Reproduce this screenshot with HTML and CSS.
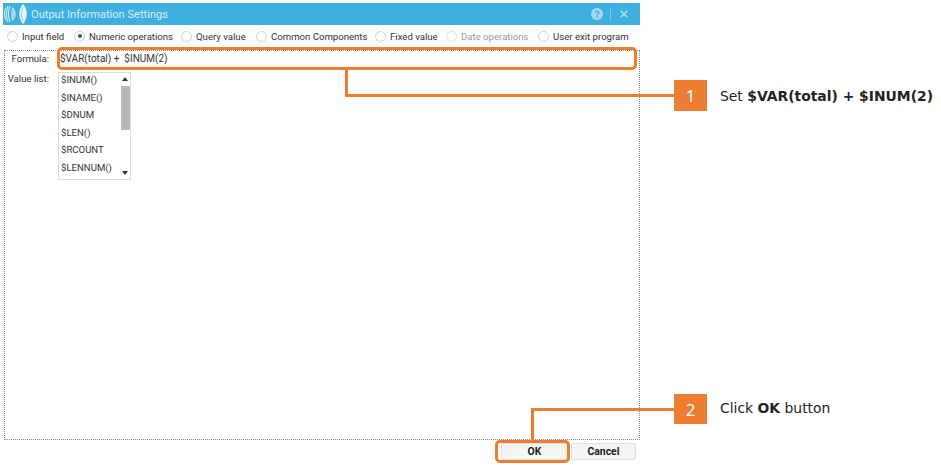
FILE: index.html
```html
<!DOCTYPE html>
<html lang="en">
<head>
<meta charset="utf-8">
<title>Output Information Settings</title>
<link rel="stylesheet" href="styles.css">
</head>
<body>
<div class="stage">
  <div class="dialog">
    <header class="titlebar">
      <svg class="logo" width="24" height="22" viewBox="0 0 24 22">
        <path d="M20 1 C15 6 15 15 20 21 C25 15 25 6 20 1Z" fill="#e4f4fb"/>
        <path d="M20 4 C18 8 18 14 20 18" fill="none" stroke="#8fd0ec" stroke-width="1"/>
        <path d="M3 5 C1 9 1 13 3 17 M5 3 C3 9 3 13 5 19 M7 3 C5 9 5 13 7 19" fill="none" stroke="#e4f4fb" stroke-width="1"/>
        <path d="M9 4 C8 9 8 13 9 18 C14 15 14 7 9 4Z" fill="#a9dcf2"/>
      </svg>
      <span class="title">Output Information Settings</span>
      <svg class="help" width="12" height="12" viewBox="0 0 12 12">
        <circle cx="6" cy="6" r="6" fill="#a5d9f0"/>
        <path d="M4.2 4.6 C4.2 2.6 7.9 2.6 7.9 4.6 C7.9 6 6 5.8 6 7.4" fill="none" stroke="#3eb0e0" stroke-width="1.4"/>
        <rect x="5.3" y="8.2" width="1.5" height="1.5" fill="#3eb0e0"/>
      </svg>
      <span class="sep"></span>
      <svg class="close" width="8" height="8" viewBox="0 0 8 8">
        <path d="M0.7 0.7 L7.3 7.3 M7.3 0.7 L0.7 7.3" stroke="#b5e0f3" stroke-width="1.6"/>
      </svg>
    </header>
    <div class="radios">
      <label class="radio radio-input"><i class="dot"></i>Input field</label>
      <label class="radio radio-numeric"><i class="dot on"></i>Numeric operations</label>
      <label class="radio radio-query"><i class="dot"></i>Query value</label>
      <label class="radio radio-common"><i class="dot"></i>Common Components</label>
      <label class="radio radio-fixed"><i class="dot"></i>Fixed value</label>
      <label class="radio radio-date off"><i class="dot"></i>Date operations</label>
      <label class="radio"><i class="dot"></i>User exit program</label>
    </div>
    <main class="panel">
      <div class="row-formula">
        <span class="lbl">Formula:</span>
        <span class="formula">$VAR(total) +&nbsp; $INUM(2)</span>
      </div>
      <div class="row-list">
        <span class="lbl">Value list:</span>
        <div class="list">
          <ul class="items">
            <li>$INUM()</li>
            <li>$INAME()</li>
            <li>$DNUM</li>
            <li>$LEN()</li>
            <li>$RCOUNT</li>
            <li>$LENNUM()</li>
          </ul>
          <div class="scroll">
            <i class="arrow up"></i>
            <i class="thumb"></i>
            <i class="arrow down"></i>
          </div>
        </div>
      </div>
    </main>
    <footer class="buttons">
      <button class="btn btn-ok">OK</button>
      <button class="btn btn-cancel">Cancel</button>
    </footer>
  </div>

  <div class="hl hl-formula"></div>
  <div class="hl hl-ok"></div>
  <div class="wire w1"></div>
  <div class="wire w2"></div>
  <div class="wire w3"></div>
  <div class="wire w4"></div>
  <div class="step step1">1</div>
  <div class="step step2">2</div>
  <p class="note note1">Set <b>$VAR(total) + $INUM(2)</b></p>
  <p class="note note2">Click <b>OK</b> button</p>
</div>
</body>
</html>
```
FILE: styles.css
```css
* { box-sizing: border-box; }
html, body { margin: 0; padding: 0; background: #fff; }
body { font-family: Roboto, "Noto Sans", sans-serif; color: #333; overflow: hidden; }
.stage { position: relative; width: 941px; height: 473px; padding: 3px 0 0 3px; }

.dialog { width: 637px; font-size: 9.6px; }

.titlebar { height: 22px; background: #3eb0e0; display: flex; align-items: center; padding-right: 12px; }
.logo { margin: 0 4px 0 0; flex: none; }
.title { font-size: 11.1px; color: #d6eef9; flex: 1; }
.help { flex: none; }
.sep { width: 1px; height: 13px; background: #79c9ea; margin: 0 9px 0 7px; }
.close { flex: none; }

.radios { height: 22px; display: flex; align-items: center; padding-left: 4px; }
.radio { display: flex; align-items: center; white-space: nowrap; color: #333; }
.dot { width: 11px; height: 11px; border-radius: 50%; border: 1px solid #cfcfcf; background: #fff; margin-right: 4px; flex: none; position: relative; }
.dot.on::after { content: ""; position: absolute; left: 2.5px; top: 2.5px; width: 4px; height: 4px; border-radius: 50%; background: #0f6d9e; }
.radio-input { width: 67px; }
.radio-numeric { width: 107px; }
.radio-query { width: 75px; }
.radio-common { width: 119px; }
.radio-fixed { width: 71px; }
.radio-date { width: 92px; }
.off { color: #9a9a9a; }
.off .dot { border-color: #dedede; }

.panel { height: 390px; width: 636px; margin: 3px 0 0 1px; border: 1px dotted #8c8c8c; }
.row-formula { display: flex; align-items: center; height: 15px; }
.lbl { width: 44px; text-align: right; flex: none; color: #333; white-space: nowrap; }
.formula { margin-left: 11px; color: #333; font-size: 10px; }
.row-list { display: flex; margin-top: 6px; align-items: flex-start; }
.row-list .lbl { line-height: 14px; }
.list { margin-left: 9px; width: 73px; height: 108px; border: 1px solid #ddd; display: flex; padding-left: 2px; }
.items { list-style: none; margin: 0; padding: 0; flex: 1; }
.items li { height: 17.6px; line-height: 14px; color: #333; }
.scroll { width: 9px; position: relative; flex: none; }
.thumb { position: absolute; left: 0; top: 13px; width: 9px; height: 44px; background: #b8b8b8; }
.arrow { position: absolute; left: 1px; width: 0; height: 0; border-left: 3.5px solid transparent; border-right: 3.5px solid transparent; }
.arrow.up { top: 4px; border-bottom: 4px solid #333; }
.arrow.down { bottom: 4px; border-top: 4px solid #333; }

.buttons { display: flex; justify-content: flex-end; gap: 3px; margin-top: 3px; width: 633px; }
.btn { height: 17px; padding: 0 0 1px; font: bold 10.4px Roboto, "Noto Sans", sans-serif; color: #222; background: #f5f5f5; border: 1px solid #e0e0e0; border-radius: 2px; }
.btn-ok { width: 67px; }
.btn-cancel { width: 65px; }

.hl { position: absolute; border: 3px solid #ed7d31; border-radius: 5px; }
.hl-formula { left: 57px; top: 47px; width: 580px; height: 23px; }
.hl-ok { left: 495px; top: 440px; width: 75px; height: 23px; }
.wire { position: absolute; background: #ed7d31; }
.w1 { left: 345px; top: 69px; width: 3px; height: 28px; }
.w2 { left: 345px; top: 94px; width: 330px; height: 3px; }
.w3 { left: 531px; top: 408px; width: 144px; height: 3px; }
.w4 { left: 531px; top: 408px; width: 3px; height: 33px; }
.step { position: absolute; left: 674px; width: 33px; background: #ed7d31; color: #fff; font: 17px/31px "Noto Sans", sans-serif; text-align: center; }
.step1 { top: 80px; height: 31px; }
.step2 { top: 394px; height: 30px; }
.note { position: absolute; left: 720px; margin: 0; font: 13.9px/18px "DejaVu Sans", sans-serif; color: #222; white-space: nowrap; }
.note1 { top: 87px; }
.note2 { top: 399px; }
```
